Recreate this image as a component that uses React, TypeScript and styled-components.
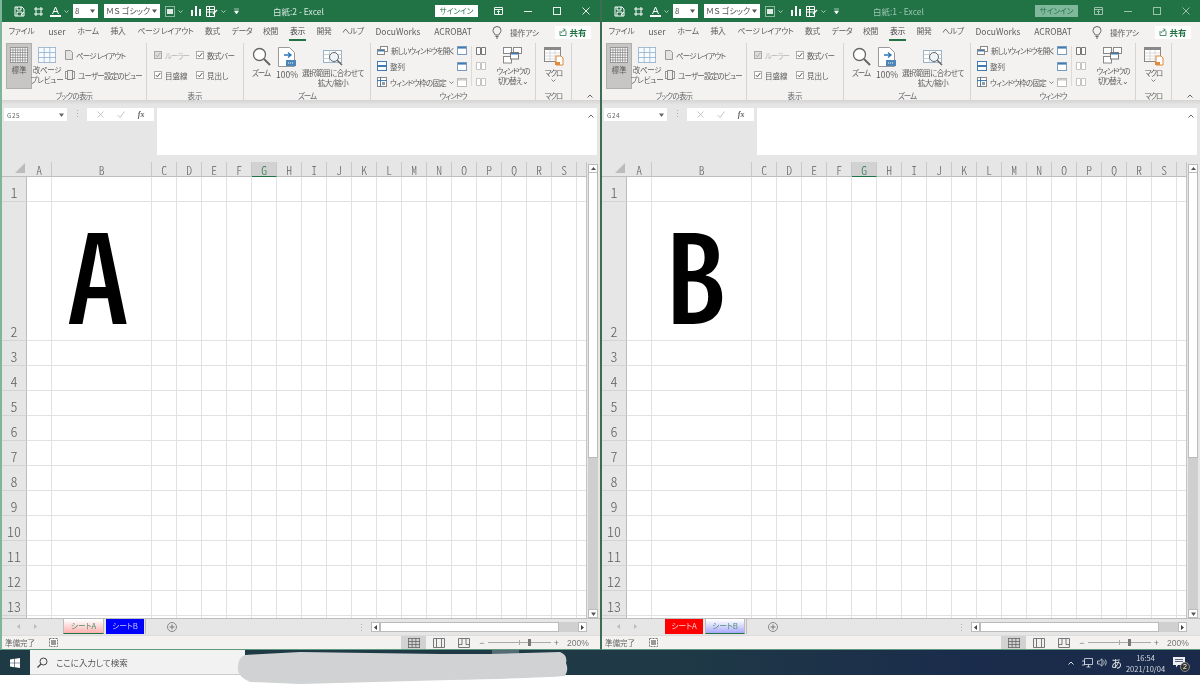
import React from "react";
import styled, { createGlobalStyle } from "styled-components";

const Global = createGlobalStyle`
  html, body { margin: 0; padding: 0; width: 1200px; height: 685px; overflow: hidden; background: #fff; }
  * { box-sizing: border-box; }
  svg { display: block; flex: none; }
`;

const UI = `"Noto Sans CJK JP", "Noto Sans", sans-serif`;

const Page = styled.div`
  position: relative; width: 1200px; height: 685px; overflow: hidden; background: #fff;
  font-family: ${UI}; font-feature-settings: "palt"; color: #555; filter: blur(0.3px);
`;
const Windows = styled.div` display: flex; height: 650px; `;
const Win = styled.div<{ $edge: string }>`
  width: 600px; height: 650px; display: flex; flex-direction: column;
  border-left: 2px solid ${p => p.$edge}; border-bottom: 1px solid #5f9a7d; background: #e6e6e6;
`;

/* title bar */
const TitleBar = styled.div`
  height: 22px; flex: none; background: #217346; display: flex; align-items: center; color: #fff;
  padding-left: 12px;
`;
const Slot = styled.div<{ $w: number; $ml?: number }>`
  width: ${p => p.$w}px; margin-left: ${p => p.$ml ?? 0}px; flex: none; display: flex; align-items: center; gap: 3px;
`;
const Select = styled.div<{ $w: number; $ml: number }>`
  width: ${p => p.$w}px; margin-left: ${p => p.$ml}px; height: 14px; background: #fff; color: #555; flex: none;
  display: flex; align-items: center; justify-content: space-between; padding: 0 3px 0 2px;
  font-size: 8px; line-height: 14px; white-space: nowrap;
`;
const WinTitle = styled.div<{ $dim: boolean }>`
  width: 193px; padding-left: 31px; font-size: 8.5px; flex: none; white-space: nowrap;
  color: ${p => (p.$dim ? "#9cc6b1" : "#d5e8de")};
`;
const SignIn = styled.div<{ $dim: boolean }>`
  width: 43px; height: 12px; flex: none; text-align: center; font-size: 7.5px; line-height: 12px;
  background: ${p => (p.$dim ? "#7fb89b" : "#fff")}; color: #217346;
`;
const CapButtons = styled.div` display: flex; margin-left: 6px; `;
const CapBtn = styled.div<{ $dim: boolean }>`
  width: 29px; height: 22px; display: flex; align-items: center; justify-content: center;
  opacity: ${p => (p.$dim ? 0.55 : 0.9)};
`;

/* ribbon tabs */
const TabRow = styled.div`
  height: 20px; flex: none; background: #f3f2f1; display: flex; align-items: center; font-size: 7.8px; color: #5c5c5c;
`;
const RTab = styled.div<{ $w: number; $on?: boolean; $latin?: boolean }>`
  width: ${p => p.$w}px; flex: none; height: 20px; text-align: center; line-height: 18px; white-space: nowrap; position: relative;
  font-size: ${p => (p.$latin ? "8.5px" : "7.8px")}; letter-spacing: ${p => (p.$latin ? "0" : "-0.3px")};
  color: ${p => (p.$on ? "#3d3d3d" : "inherit")};
  &::after { content: ""; display: ${p => (p.$on ? "block" : "none")}; position: absolute; left: 5px; right: 5px; bottom: 1px; height: 2px; background: #217346; }
`;
const TellMe = styled.div`
  display: flex; align-items: center; gap: 8px; width: 76px; padding-left: 13px; white-space: nowrap; overflow: hidden; flex: none;
  letter-spacing: -0.2px;
`;
const Share = styled.div`
  width: 36px; height: 13px; background: #fff; display: flex; align-items: center; justify-content: center; gap: 2px;
  color: #217346; font-size: 8.5px; font-weight: 700; flex: none;
`;

/* ribbon body */
const Ribbon = styled.div`
  height: 58px; flex: none; background: #f3f2f1; display: flex; position: relative; font-size: 7.5px; color: #5c5c5c;
`;
const Group = styled.div<{ $w: number }>`
  width: ${p => p.$w}px; flex: none; display: flex; flex-direction: column; border-right: 1px solid #d6d5d3; margin-top: 1px;
`;
const GroupBody = styled.div<{ $pl?: number }>` flex: 1; display: flex; padding-left: ${p => p.$pl ?? 0}px; min-height: 0; `;
const GroupName = styled.div<{ $ls?: number }>`
  height: 8px; line-height: 8px; text-align: center; font-size: 7.5px; color: #666; white-space: nowrap;
  letter-spacing: ${p => p.$ls ?? 0}px;
`;
const Big = styled.div<{ $w: number; $on?: boolean; $ml?: number; $ls?: number }>`
  width: ${p => p.$w}px; height: 46px; flex: none; margin-left: ${p => p.$ml ?? 0}px;
  display: flex; flex-direction: column; align-items: center; padding-top: 3px; text-align: center;
  line-height: 10px; white-space: nowrap; letter-spacing: ${p => p.$ls ?? 0}px;
  background: ${p => (p.$on ? "#c8c6c4" : "transparent")};
  border: 1px solid ${p => (p.$on ? "#b0aeac" : "transparent")};
`;
const BigLabel = styled.div<{ $fs?: number }>` margin-top: 2px; font-size: ${p => p.$fs ?? 7.5}px; `;
const Stack = styled.div<{ $w: number; $ml?: number; $pt?: number }>`
  width: ${p => p.$w}px; flex: none; margin-left: ${p => p.$ml ?? 0}px; padding-top: ${p => p.$pt ?? 2}px; display: flex; flex-direction: column;
`;
const Small = styled.div<{ $h: number; $dim?: boolean; $ls?: number }>`
  height: ${p => p.$h}px; display: flex; align-items: center; gap: 3px; white-space: nowrap;
  letter-spacing: ${p => p.$ls ?? 0}px;
  color: ${p => (p.$dim ? "#b5b5b5" : "inherit")};
`;
const Check = styled.div<{ $dim?: boolean }>`
  width: 8px; height: 8px; flex: none; background: ${p => (p.$dim ? "#dcdcdc" : "#fff")}; border: 1px solid #aaa;
  display: flex; align-items: center; justify-content: center;
`;
const MiniSep = styled.div` width: 1px; height: 40px; margin: 3px 4px 0; background: #dcdbd9; flex: none; `;
const Collapse = styled.div` position: absolute; right: 7px; bottom: 2px; `;
const RibbonEdge = styled.div` height: 5px; flex: none; background: linear-gradient(#d4d4d4, #e6e6e6); `;

/* formula */
const Formula = styled.div` height: 57px; flex: none; display: flex; align-items: flex-start; padding: 3px 3px 0 2px; `;
const NameBox = styled.div`
  width: 63px; height: 13px; background: #fff; flex: none; font-size: 6.5px; color: #666; padding: 0 3px;
  display: flex; align-items: center; justify-content: space-between; letter-spacing: .4px;
`;
const Dots = styled.div` width: 20px; flex: none; text-align: center; line-height: 11px; font-size: 9px; color: #aaa; `;
const FxBox = styled.div`
  width: 67px; height: 13px; background: #fff; flex: none; display: flex; align-items: center; justify-content: space-around; padding: 0 3px;
`;
const Fx = styled.span` font: italic 700 8px "Liberation Serif", serif; color: #666; `;
const FormulaInput = styled.div`
  flex: 1; margin-left: 3px; height: 47px; background: #fff; display: flex; justify-content: flex-end; padding: 6px 3px 0 0;
`;

/* sheet */
const SheetArea = styled.div` height: 456px; flex: none; display: flex; `;
const Grid = styled.div`
  width: 585px; height: 456px; overflow: hidden; flex: none; background: #fff; display: grid;
  border-right: 1px solid #c4c4c4;
  grid-template-columns: 25px 25px 100px repeat(17, 25px) 10px;
  grid-template-rows: 15px 25px 139px repeat(11, 25px) 10px;
`;
const Corner = styled.div`
  background: #e6e6e6; border-bottom: 1px solid #bdbdbd; display: flex; align-items: flex-end; justify-content: flex-end; padding: 0 2px 3px 0;
`;
const ColHead = styled.div<{ $sel?: boolean }>`
  background: ${p => (p.$sel ? "#d2d2d2" : "#e6e6e6")}; color: ${p => (p.$sel ? "#217346" : "#5f5f5f")};
  border-right: 1px solid #c9c9c9; border-bottom: ${p => (p.$sel ? "1px solid #217346" : "1px solid #bdbdbd")};
  font-feature-settings: "hwid"; font-size: 11.5px; font-weight: 300; line-height: 16px; text-align: center; overflow: hidden;
`;
const RowHead = styled.div`
  background: #e6e6e6; color: #5f5f5f; border-right: 1px solid #bdbdbd; border-bottom: 1px solid #d4d4d4;
  font-feature-settings: "hwid"; font-size: 14px; font-weight: 300; display: flex; align-items: flex-end; justify-content: center; line-height: 18px;
`;
const Cell = styled.div`
  background: #fff; border-right: 1px solid #e2e2e2; border-bottom: 1px solid #e2e2e2; min-width: 0; position: relative;
`;
const Big1 = styled.div<{ $pl: number }>`
  position: absolute; left: ${p => p.$pl}px; bottom: -5px; color: #000;
  font-feature-settings: "hwid"; font-size: 123px; line-height: 1.22; font-weight: 500;
`;
const VScroll = styled.div` width: 10px; margin-left: 1px; padding-top: 2px; flex: none; display: flex; flex-direction: column; `;
const ArrowBox = styled.div<{ $h?: number }>`
  height: ${p => p.$h ?? 9}px; background: #fff; border: 1px solid #bbb; display: flex; align-items: center; justify-content: center; flex: none;
`;
const VTrack = styled.div` flex: 1; background: #cfcfcf; `;
const VThumb = styled.div` height: 285px; background: #fff; border: 1px solid #bbb; border-top: none; `;

/* sheet tabs */
const TabsBar = styled.div`
  height: 17px; flex: none; background: #e6e6e6; border-top: 1px solid #bdbdbd; display: flex; align-items: flex-start; font-size: 7.8px; letter-spacing: -.1px;
`;
const Nav = styled.div<{ $w: number }>` width: ${p => p.$w}px; height: 15px; flex: none; display: flex; align-items: center; padding-left: 15px; gap: 14px; `;
const SheetTab = styled.div<{ $w: number; $bg: string; $fg: string; $on: boolean; $ml?: number }>`
  width: ${p => p.$w}px; height: 15px; flex: none; margin-left: ${p => p.$ml ?? 0}px;
  text-align: center; line-height: 14px; color: ${p => p.$fg};
  background: ${p => (p.$on ? `linear-gradient(#fff 5%, ${p.$bg})` : p.$bg)};
  border-bottom: ${p => (p.$on ? "1px solid #217346" : "none")};
  border-left: ${p => (p.$on ? "1px solid #bdbdbd" : "none")};
  border-right: ${p => (p.$on ? "1px solid #bdbdbd" : "none")};
`;
const TabEnd = styled.div` width: 1px; height: 15px; margin-left: 1px; background: #bdbdbd; flex: none; `;
const PlusSlot = styled.div<{ $ml: number }>` margin-left: ${p => p.$ml}px; margin-top: 3px; flex: none; `;
const HArea = styled.div` margin-left: auto; margin-right: 13px; display: flex; align-items: center; margin-top: 3px; `;
const HDots = styled.div` width: 14px; font-size: 9px; color: #aaa; line-height: 9px; text-align: left; `;
const HTrack = styled.div` width: 216px; height: 10px; background: #d0d0d0; display: flex; justify-content: space-between; `;
const HLeft = styled.div` display: flex; `;
const HArrow = styled.div` width: 9px; height: 10px; background: #fff; border: 1px solid #bbb; display: flex; align-items: center; justify-content: center; flex: none; `;
const HThumb = styled.div` width: 179px; height: 10px; background: #fff; border: 1px solid #bbb; flex: none; `;

/* status */
const Status = styled.div`
  flex: 1; background: #f3f2f1; border-top: 1px solid #dcdcdc; display: flex; align-items: center; font-size: 7.5px; color: #666; padding-left: 3px;
`;
const MacroIco = styled.div` margin-left: 14px; `;
const StatusRight = styled.div` margin-left: auto; display: flex; align-items: center; height: 100%; `;
const ViewBtn = styled.div<{ $on?: boolean }>`
  width: 25px; height: 100%; display: flex; align-items: center; justify-content: center; background: ${p => (p.$on ? "#d2d2d2" : "transparent")};
`;
const ZoomMark = styled.div<{ $w: number }>` width: ${p => p.$w}px; text-align: center; font: 9px "Liberation Sans", sans-serif; color: #777; `;
const Slider = styled.div`
  width: 63px; height: 1px; background: #aaa; position: relative;
  &::before { content: ""; position: absolute; left: 31px; top: -2px; width: 1px; height: 5px; background: #aaa; }
  &::after { content: ""; position: absolute; left: 40px; top: -3px; width: 3px; height: 7px; background: #777; }
`;
const Pct = styled.div` width: 20px; margin-left: 5px; margin-right: 13px; font: 8.5px "Liberation Sans", sans-serif; color: #777; `;

/* taskbar */
const Taskbar = styled.div`
  height: 25px; display: flex; align-items: stretch; color: #fff;
  background: linear-gradient(90deg, #1e3a45 0, #1f3a46 55%, #1a2c4b 80%, #1b2a4a 100%);
`;
const Start = styled.div` width: 30px; flex: none; display: flex; align-items: center; justify-content: center; `;
const Search = styled.div`
  width: 215px; flex: none; background: #f2f2f2; border-bottom: 1px solid #ccc; color: #555; display: flex; align-items: center; gap: 8px;
  padding-left: 7px; font-size: 8.5px;
`;
const TaskGlow = styled.div` margin-left: 247px; width: 27px; background: #566c75; flex: none; `;
const Tray = styled.div` margin-left: auto; display: flex; align-items: center; padding-right: 9px; `;
const TrayItem = styled.div<{ $w: number }>` width: ${p => p.$w}px; display: flex; justify-content: center; align-items: center; flex: none; position: relative; `;
const Ime = styled.span` font-size: 11px; line-height: 14px; color: #e8e8e8; `;
const Clock = styled.div` font-size: 7.5px; line-height: 11px; text-align: center; color: #d8dde4; white-space: nowrap; `;
const Badge = styled.div`
  position: absolute; right: 1px; bottom: -4px; width: 10px; height: 10px; border-radius: 50%; background: #333; border: 1px solid #888;
  font-size: 7px; line-height: 8px; text-align: center; color: #fff; font-family: "Liberation Sans", sans-serif;
`;
const Scribble = styled.svg` position: absolute; left: 0; top: 0; `;

/* ---------- drawings ---------- */
const Chev = ({ c = "#666", s = 5 }: { c?: string; s?: number }) => (
  <svg width={s} height={s} viewBox="0 0 10 10"><path d="M1 3l4 4 4-4" fill="none" stroke={c} strokeWidth="1.6" /></svg>
);
const Tri = ({ c = "#555" }: { c?: string }) => (
  <svg width="5" height="4" viewBox="0 0 10 8"><path d="M0 1h10L5 8z" fill={c} /></svg>
);
const Mesh = ({ w, h, nx, ny, c, fill = "#fff" }: { w: number; h: number; nx: number; ny: number; c: string; fill?: string }) => {
  const xs = Array.from({ length: nx + 1 }, (_, i) => 0.5 + (i * (w - 1)) / nx);
  const ys = Array.from({ length: ny + 1 }, (_, i) => 0.5 + (i * (h - 1)) / ny);
  return (
    <svg width={w} height={h}>
      <rect x=".5" y=".5" width={w - 1} height={h - 1} fill={fill} />
      {xs.map((x, i) => <line key={i} x1={x} x2={x} y1="0" y2={h} stroke={c} strokeWidth=".8" />)}
      {ys.map((y, i) => <line key={i} y1={y} y2={y} x1="0" x2={w} stroke={c} strokeWidth=".8" />)}
    </svg>
  );
};
const W = { fill: "none", stroke: "#fff", strokeWidth: 1 };
const SaveI = () => (<svg width="11" height="11" viewBox="0 0 11 11"><path d="M1 1h7l2 2v7H1zM3 1v3h4V1M3 10V6h5v4" {...W} /><path d="M7 9l3-3" stroke="#fff" /></svg>);
const TouchI = () => (<svg width="11" height="11" viewBox="0 0 11 11"><path d="M3 1v9M8 1v9M1 3h9M1 8h9" {...W} /></svg>);
const FontColorI = () => (<svg width="11" height="11" viewBox="0 0 11 11"><path d="M2.5 8L5.5 1l3 7M3.7 5.5h3.6" {...W} /><rect y="9" width="11" height="2" fill="#fff" /></svg>);
const QatGrid = () => (<svg width="10" height="11" viewBox="0 0 10 11"><rect x=".5" y=".5" width="9" height="10" fill="none" stroke="#fff" strokeDasharray="1 1" /><rect x="2" y="3" width="6" height="5" fill="#fff" opacity=".85" /></svg>);
const BarsI = () => (<svg width="10" height="10" viewBox="0 0 10 10"><path d="M0 4h2v6H0zM4 0h2v10H4zM8 3h2v7H8z" fill="#fff" /></svg>);
const PivotI = () => (<svg width="12" height="11" viewBox="0 0 12 11"><path d="M.5.5h8v10h-8zM.5 3.5h8M.5 6h8M3.5.5v10" {...W} /><path d="M7 8l4-4" stroke="#fff" strokeWidth="1.5" /></svg>);
const QatMore = () => (<svg width="5" height="7" viewBox="0 0 5 7"><path d="M0 1h5M.5 3l2 3 2-3z" fill="#fff" stroke="#fff" strokeWidth=".6" /></svg>);
const RibbonDisp = () => (<svg width="9" height="8" viewBox="0 0 9 8"><path d="M.5.5h8v7h-8zM.5 2.5h8" {...W} /><path d="M4.5 7V4M3 5l1.5-1.5L6 5" {...W} /></svg>);
const MinI = () => (<svg width="8" height="8"><path d="M0 4.5h8" stroke="#fff" /></svg>);
const MaxI = () => (<svg width="8" height="8"><rect x=".5" y=".5" width="7" height="7" fill="none" stroke="#fff" /></svg>);
const CloseI = () => (<svg width="8" height="8"><path d="M.5.5l7 7M7.5.5l-7 7" stroke="#fff" /></svg>);
const Bulb = () => (<svg width="10" height="13" viewBox="0 0 10 13"><path d="M3.3 9C2.8 7.5 1 6.6 1 4.5a4 4 0 018 0C9 6.6 7.2 7.5 6.7 9zM3.5 10.5h3M4 12h2" fill="none" stroke="#666" /></svg>);
const ShareI = () => (<svg width="8" height="8" viewBox="0 0 8 8"><path d="M1 3v4.5h6V3M2.5 5c0-2 1.5-3 3.5-3M4.5.5L6.5 2 4.5 3.5" fill="none" stroke="#217346" strokeWidth=".8" /></svg>);
const PageI = () => (<svg width="8" height="10" viewBox="0 0 8 10"><path d="M.5.5h5l2 2v7h-7z" fill="#e2e2e2" stroke="#999" /></svg>);
const CustomI = () => (<svg width="10" height="10" viewBox="0 0 10 10"><rect x=".5" y="1.5" width="9" height="7" fill="none" stroke="#999" /><rect x="2.5" y=".5" width="5" height="9" fill="#eee" stroke="#888" /></svg>);
const Tick = ({ c = "#555" }: { c?: string }) => (<svg width="6" height="6" viewBox="0 0 6 6"><path d="M.7 3l1.7 1.8L5.3 1" fill="none" stroke={c} /></svg>);
const Glass = () => (<svg width="19" height="19" viewBox="0 0 19 19"><circle cx="7.5" cy="7.5" r="6" fill="#fff" stroke="#666" strokeWidth="1.3" /><path d="M12 12l6 6" stroke="#666" strokeWidth="2" /></svg>);
const DocZoom = () => (<svg width="18" height="20" viewBox="0 0 18 20"><path d="M.5.5h11l5 5v14H.5z" fill="#fff" stroke="#999" /><path d="M6 8h6M10 5.5L13 8l-3 2.5" fill="none" stroke="#2b78b8" strokeWidth="1.3" /><rect x="8" y="13" width="10" height="6" fill="#4d86b8" /><path d="M10 16h6" stroke="#fff" strokeDasharray="1 1" /></svg>);
const FitZoom = () => (<svg width="20" height="19" viewBox="0 0 20 19"><rect x=".5" y="3.5" width="18" height="12" fill="#fff" stroke="#97b2c9" /><path d="M.5 7.5h18M.5 11.5h18M6.5 3.5v12M12.5 3.5v12" stroke="#b5c8d8" strokeWidth=".8" /><circle cx="11" cy="10" r="4.5" fill="#eef3f7" stroke="#666" /><path d="M14 13l5 5" stroke="#666" strokeWidth="1.6" /></svg>);
const NewWin = () => (<svg width="11" height="9" viewBox="0 0 11 9"><rect x="3.5" y=".5" width="7" height="5" fill="#fff" stroke="#888" /><rect x=".5" y="3.5" width="7" height="5" fill="#fff" stroke="#888" /><rect x="1" y="4" width="6" height="1.5" fill="#3f7cb4" /></svg>);
const WinMini = ({ c = "#3f7cb4", edge = "#7a9cbc", w = 10 }: { c?: string; edge?: string; w?: number }) => (<svg width={w} height="9" viewBox={`0 0 ${w} 9`}><rect x=".5" y=".5" width={w - 1} height="8" fill="#fff" stroke={edge} /><rect x="1" y="1" width={w - 2} height="1.6" fill={c} /></svg>);
const Arrange = () => (<svg width="10" height="10" viewBox="0 0 10 10"><rect x=".5" y=".5" width="9" height="4" fill="#fff" stroke="#3f7cb4" /><rect x=".5" y="5.5" width="9" height="4" fill="#fff" stroke="#3f7cb4" /></svg>);
const Freeze = () => (<svg width="10" height="10" viewBox="0 0 10 10"><rect x=".5" y=".5" width="9" height="9" fill="#fff" stroke="#888" /><path d="M3.5 0v10M0 3.5h10" stroke="#3f7cb4" /><rect x="5" y="5" width="3" height="3" fill="#999" /></svg>);
const Book = ({ c = "#777" }: { c?: string }) => (<svg width="10" height="8" viewBox="0 0 10 8"><path d="M.5.5h4v7h-4zM5.5.5h4v7h-4z" fill="#fff" stroke={c} /></svg>);
const SwitchWin = () => (<svg width="20" height="17" viewBox="0 0 20 17"><rect x=".5" y=".5" width="8" height="6" fill="#fff" stroke="#888" /><rect x="10.5" y=".5" width="8" height="6" fill="#fff" stroke="#888" /><rect x=".5" y="9.5" width="8" height="6.5" fill="#fff" stroke="#888" /><rect x="7.5" y="5.5" width="8" height="6.5" fill="#fff" stroke="#777" /><rect x="8" y="6" width="7" height="1.5" fill="#3f7cb4" /></svg>);
const MacroBig = () => (<svg width="20" height="19" viewBox="0 0 20 19"><rect x=".5" y=".5" width="16" height="14" fill="#fff" stroke="#888" /><rect x="1" y="1" width="15" height="2" fill="#888" /><path d="M1 6h15M1 9h15M1 12h15M6 3v11M11 3v11" stroke="#ccc" strokeWidth=".7" /><path d="M12 9h5l2 2v7h-7z" fill="#fff" stroke="#e08a3c" /><rect x="11" y="15" width="5" height="3" fill="#e08a3c" /></svg>);
const CornerTri = () => (<svg width="10" height="10"><path d="M10 0v10H0z" fill="#bcbcbc" /></svg>);
const XI = () => (<svg width="7" height="7"><path d="M.5.5l6 6M6.5.5l-6 6" stroke="#c4c4c4" /></svg>);
const OkI = () => (<svg width="8" height="7"><path d="M.5 4l2.5 2.5L7.5.5" fill="none" stroke="#c4c4c4" /></svg>);
const ChevUp = ({ c = "#666" }: { c?: string }) => (<svg width="6" height="4" viewBox="0 0 6 4"><path d="M.5 3.5L3 1l2.5 2.5" fill="none" stroke={c} /></svg>);
const TriUp = () => (<svg width="5" height="3" viewBox="0 0 5 3"><path d="M0 3h5L2.5 0z" fill="#555" /></svg>);
const ArrowH = ({ d, c = "#444" }: { d: "l" | "r"; c?: string }) => (<svg width="3" height="5"><path d={d === "l" ? "M3 0v5L0 2.5z" : "M0 0v5l3-2.5z"} fill={c} /></svg>);
const PlusI = () => (<svg width="10" height="10" viewBox="0 0 10 10"><circle cx="5" cy="5" r="4.5" fill="none" stroke="#888" /><path d="M5 2.5v5M2.5 5h5" stroke="#777" /></svg>);
const MacroSmall = () => (<svg width="9" height="9" viewBox="0 0 9 9"><rect x=".5" y=".5" width="8" height="8" fill="#fff" stroke="#777" strokeDasharray="2 1" /><rect x="2" y="2" width="5" height="5" fill="#999" /></svg>);
const VNormal = () => <Mesh w={12} h={10} nx={3} ny={3} c="#666" fill="none" />;
const VPage = () => (<svg width="12" height="10"><path d="M.5.5h11v9H.5zM3.5.5v9M8.5.5v9" fill="none" stroke="#777" /></svg>);
const VBreak = () => (<svg width="12" height="10"><path d="M.5.5h11v9H.5zM.5 6.5h3.5V.5M8 .5v6h3.5" fill="none" stroke="#777" /></svg>);
const WinLogo = () => (<svg width="10" height="10" viewBox="0 0 10 10"><path d="M0 1.4L4.3.8v3.9H0zM4.9.7L10 0v4.7H4.9zM0 5.3h4.3v3.9L0 8.6zM4.9 5.3H10V10l-5.1-.7z" fill="#fff" /></svg>);
const SearchI = () => (<svg width="11" height="11" viewBox="0 0 11 11"><circle cx="6.5" cy="4.5" r="3.5" fill="none" stroke="#444" /><path d="M4 7l-3.5 3.5" stroke="#444" strokeWidth="1.2" /></svg>);
const NetI = () => (<svg width="11" height="10" viewBox="0 0 11 10"><path d="M2.5.5h8v6h-8zM4.5 9h4M6.5 6.5V9M0 3h2.5v4H0" fill="none" stroke="#dfe3e8" strokeWidth=".8" /></svg>);
const SpkI = () => (<svg width="11" height="9" viewBox="0 0 11 9"><path d="M.5 3h2L5 .8v7.4L2.5 6h-2z M6.5 2.5c.8 1.2.8 2.8 0 4M8.2 1.5c1.3 1.8 1.3 4.2 0 6" fill="none" stroke="#dfe3e8" strokeWidth=".8" /></svg>);
const NoteI = () => (<svg width="12" height="11" viewBox="0 0 12 11"><path d="M0 0h12v8H5L3 10.5V8H0z" fill="#eef0f3" /><path d="M2 2.5h8M2 4.5h8" stroke="#1b2a4a" strokeWidth=".7" /></svg>);

/* ---------- data ---------- */
const tabs: [string, number][] = [["ファイル", 39], ["user", 32], ["ホーム", 30], ["挿入", 30], ["ページ レイアウト", 65], ["数式", 29], ["データ", 30], ["校閲", 27], ["表示", 27], ["開発", 26], ["ヘルプ", 32], ["DocuWorks", 58], ["ACROBAT", 52]];
const cols = "ABCDEFGHIJKLMNOPQRST".split("");
const rows = [1, 2, 3, 4, 5, 6, 7, 8, 9, 10, 11, 12, 13, 14];

type SheetT = { w: number; bg: string; fg: string; on: boolean; name: string };
type WinP = { edge: string; dim: boolean; book: string; name: string; letter: string; pl: number; nav: number; sheets: SheetT[] };

function ExcelWindow({ edge, dim, book, name, letter, pl, nav, sheets }: WinP) {
  return (
    <Win $edge={edge}>
      <TitleBar>
        <Slot $w={19}><SaveI /></Slot>
        <Slot $w={17}><TouchI /></Slot>
        <Slot $w={23}><FontColorI /><Chev c="#cfe3d8" /></Slot>
        <Select $w={25} $ml={0}>8<Tri /></Select>
        <Select $w={56} $ml={6}>ＭＳ ゴシック<Tri /></Select>
        <Slot $w={26} $ml={5}><QatGrid /><Chev c="#cfe3d8" /></Slot>
        <Slot $w={15}><BarsI /></Slot>
        <Slot $w={28}><PivotI /><Chev c="#cfe3d8" /></Slot>
        <Slot $w={8}><QatMore /></Slot>
        <WinTitle $dim={dim}>{book} - Excel</WinTitle>
        <SignIn $dim={dim}>サインイン</SignIn>
        <CapButtons>
          <CapBtn $dim={dim}><RibbonDisp /></CapBtn>
          <CapBtn $dim={dim}><MinI /></CapBtn>
          <CapBtn $dim={dim}><MaxI /></CapBtn>
          <CapBtn $dim={dim}><CloseI /></CapBtn>
        </CapButtons>
      </TitleBar>

      <TabRow>
        {tabs.map(([t, w]) => <RTab key={t} $w={w} $on={t === "表示"} $latin={/^[a-z]/i.test(t)}>{t}</RTab>)}
        <TellMe><Bulb />操作アシ</TellMe>
        <Share><ShareI />共有</Share>
      </TabRow>

      <Ribbon>
        <Group $w={145}>
          <GroupBody $pl={4}>
            <Big $w={26} $on><Mesh w={18} h={16} nx={7} ny={6} c="#8a8a8a" /><BigLabel>標準</BigLabel></Big>
            <Big $w={28} $ml={1} $ls={-0.3}><Mesh w={18} h={16} nx={3} ny={3} c="#8fb0cc" fill="#f7fbff" /><BigLabel>改ページ<br />プレビュー</BigLabel></Big>
            <Stack $w={78} $ml={4}>
              <Small $h={20} $ls={-0.8}><PageI />ページ レイアウト</Small>
              <Small $h={20} $ls={-0.8}><CustomI />ユーザー設定のビュー</Small>
            </Stack>
          </GroupBody>
          <GroupName $ls={-0.8}>ブックの表示</GroupName>
        </Group>
        <Group $w={97}>
          <GroupBody $pl={7}>
            <Stack $w={42}>
              <Small $h={20} $dim $ls={-1.1}><Check $dim><Tick c="#aaa" /></Check>ルーラー</Small>
              <Small $h={20}><Check><Tick /></Check>目盛線</Small>
            </Stack>
            <Stack $w={46}>
              <Small $h={20} $ls={-0.5}><Check><Tick /></Check>数式バー</Small>
              <Small $h={20}><Check><Tick /></Check>見出し</Small>
            </Stack>
          </GroupBody>
          <GroupName>表示</GroupName>
        </Group>
        <Group $w={127}>
          <GroupBody $pl={4}>
            <Big $w={26} $ls={-1}><Glass /><BigLabel>ズーム</BigLabel></Big>
            <Big $w={26}><DocZoom /><BigLabel $fs={8.5}>100%</BigLabel></Big>
            <Big $w={66} $ls={-0.5}><FitZoom /><BigLabel>選択範囲に合わせて<br />拡大/縮小</BigLabel></Big>
          </GroupBody>
          <GroupName $ls={-1}>ズーム</GroupName>
        </Group>
        <Group $w={165}>
          <GroupBody $pl={6}>
            <Stack $w={80} $pt={0}>
              <Small $h={15} $ls={-0.9}><NewWin />新しいウィンドウを開く</Small>
              <Small $h={16}><Arrange />整列</Small>
              <Small $h={16} $ls={-0.6}><Freeze />ウィンドウ枠の固定<Chev /></Small>
            </Stack>
            <Stack $w={10} $pt={0}>
              <Small $h={15}><WinMini /></Small>
              <Small $h={16}><WinMini /></Small>
              <Small $h={16}><WinMini c="#ccc" edge="#bbb" /></Small>
            </Stack>
            <MiniSep />
            <Stack $w={11} $pt={0}>
              <Small $h={15}><Book /></Small>
              <Small $h={16}><Book c="#c4c4c4" /></Small>
              <Small $h={16}><Book c="#c4c4c4" /></Small>
            </Stack>
            <Big $w={46} $ml={3} $ls={-1}><SwitchWin /><BigLabel>ウィンドウの<br />切り替え ⌄</BigLabel></Big>
          </GroupBody>
          <GroupName $ls={-1}>ウィンドウ</GroupName>
        </Group>
        <Group $w={36}>
          <GroupBody>
            <Big $w={35} $ls={-1.2}><MacroBig /><BigLabel>マクロ</BigLabel><Chev /></Big>
          </GroupBody>
          <GroupName $ls={-1.2}>マクロ</GroupName>
        </Group>
        <Collapse><ChevUp /></Collapse>
      </Ribbon>
      <RibbonEdge />

      <Formula>
        <NameBox>{name}<Tri c="#666" /></NameBox>
        <Dots>⋮</Dots>
        <FxBox><XI /><OkI /><Fx>fx</Fx></FxBox>
        <FormulaInput><ChevUp /></FormulaInput>
      </Formula>

      <SheetArea>
        <Grid>
          <Corner><CornerTri /></Corner>
          {cols.map(c => <ColHead key={c} $sel={c === "G"}>{c === "T" ? "" : c}</ColHead>)}
          {rows.map(r => (
            <React.Fragment key={r}>
              <RowHead>{r === 14 ? "" : r}</RowHead>
              {cols.map(c => (
                <Cell key={c}>{r === 2 && c === "B" && <Big1 $pl={pl}>{letter}</Big1>}</Cell>
              ))}
            </React.Fragment>
          ))}
        </Grid>
        <VScroll>
          <ArrowBox><TriUp /></ArrowBox>
          <VTrack><VThumb /></VTrack>
          <ArrowBox><Tri /></ArrowBox>
        </VScroll>
      </SheetArea>

      <TabsBar>
        <Nav $w={nav}><ArrowH d="l" c="#bbb" /><ArrowH d="r" c="#bbb" /></Nav>
        {sheets.map((s, i) => (
          <SheetTab key={s.name} $w={s.w} $bg={s.bg} $fg={s.fg} $on={s.on} $ml={i ? 2 : 0}>{s.name}</SheetTab>
        ))}
        <TabEnd />
        <PlusSlot $ml={21}><PlusI /></PlusSlot>
        <HArea>
          <HDots>⋮</HDots>
          <HTrack>
            <HLeft>
              <HArrow><ArrowH d="l" /></HArrow>
              <HThumb />
            </HLeft>
            <HArrow><ArrowH d="r" /></HArrow>
          </HTrack>
        </HArea>
      </TabsBar>

      <Status>
        準備完了
        <MacroIco><MacroSmall /></MacroIco>
        <StatusRight>
          <ViewBtn $on><VNormal /></ViewBtn>
          <ViewBtn><VPage /></ViewBtn>
          <ViewBtn><VBreak /></ViewBtn>
          <ZoomMark $w={12}>−</ZoomMark>
          <Slider />
          <ZoomMark $w={11}>+</ZoomMark>
          <Pct>200%</Pct>
        </StatusRight>
      </Status>
    </Win>
  );
}

export default function App() {
  return (
    <Page>
      <Global />
      <Windows>
        <ExcelWindow edge="#7fb69b" dim={false} book="白紙:2" name="G25" letter="A" pl={15} nav={61}
          sheets={[
            { name: "シートA", w: 41, bg: "#ffb0b0", fg: "#4f8f6e", on: true },
            { name: "シートB", w: 38, bg: "#0000ff", fg: "#c8c8ff", on: false },
          ]} />
        <ExcelWindow edge="#3f6b55" dim book="白紙:1" name="G24" letter="B" pl={13} nav={63}
          sheets={[
            { name: "シートA", w: 38, bg: "#ff0000", fg: "#ffd0d0", on: false },
            { name: "シートB", w: 40, bg: "#a9a9ff", fg: "#4f8f6e", on: true },
          ]} />
      </Windows>
      <Taskbar>
        <Start><WinLogo /></Start>
        <Search><SearchI />ここに入力して検索</Search>
        <TaskGlow />
        <Tray>
          <TrayItem $w={16}><ChevUp c="#dfe3e8" /></TrayItem>
          <TrayItem $w={16}><NetI /></TrayItem>
          <TrayItem $w={14}><SpkI /></TrayItem>
          <TrayItem $w={15}><Ime>あ</Ime></TrayItem>
          <TrayItem $w={43}><Clock>16:54<br />2021/10/04</Clock></TrayItem>
          <TrayItem $w={24}><NoteI /><Badge>2</Badge></TrayItem>
        </Tray>
      </Taskbar>
      <Scribble width="1200" height="685">
        <path d="M245 655L300 652L440 654L490 654L560 652Q568 655 566 663Q569 670 565 676Q540 678 450 680L300 684L250 682Q236 676 238 666Q238 658 245 655Z" fill="#d0d2d3" />
      </Scribble>
    </Page>
  );
}
